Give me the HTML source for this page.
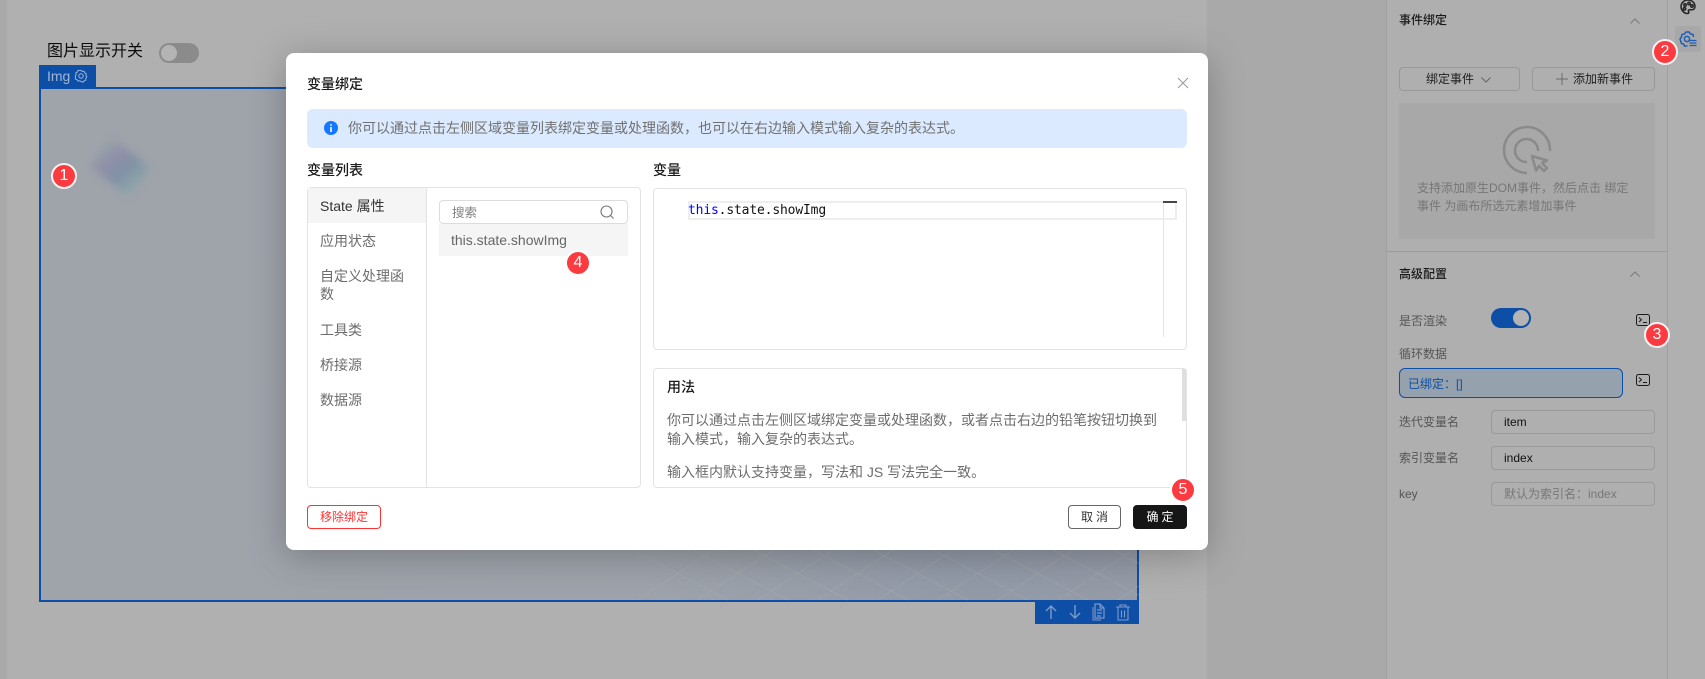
<!DOCTYPE html>
<html lang="zh"><head><meta charset="utf-8"><title>变量绑定</title>
<style>
*{box-sizing:border-box}
html,body{margin:0;padding:0;width:1705px;height:679px;overflow:hidden;background:#b0b0b0;font-family:"Liberation Sans","Noto Sans CJK SC",sans-serif;color:#6c6c6c}
.a{position:absolute}
.t{position:absolute;white-space:nowrap;line-height:20px;height:20px}
.f12{font-size:12px}.f14{font-size:14px}
.b{color:#1a1a1a;font-weight:500}
.badge{position:absolute;width:26px;height:26px;border-radius:50%;background:#fb3b40;border:2px solid #f2f2f2;color:#fff;font-size:16px;line-height:22px;text-align:center;font-family:"Liberation Sans",sans-serif}
.btn{position:absolute;border:1px solid #989898;border-radius:4px}
.inp{position:absolute;border:1px solid #999;border-radius:4px;left:1491px;width:164px;height:24px;font-size:12px;line-height:22px;padding-left:12px;color:#111}
svg{position:absolute;overflow:visible;display:block}
</style></head><body>

<!-- backgrounds -->
<div class="a" style="left:0;top:0;width:7px;height:679px;background:#a9a9a9"></div>
<div class="a" style="left:1207px;top:0;width:179px;height:679px;background:#a9a9a9"></div>
<div class="a" style="left:1386px;top:0;width:282px;height:679px;background:#afafaf;border-left:1px solid #a0a0a0;border-right:1px solid #a0a0a0"></div>

<!-- canvas -->
<div class="t" style="left:47px;top:42px;font-size:16px;color:#0c0c0c">图片显示开关</div>
<div class="a" style="left:159px;top:43px;width:40px;height:20px;border-radius:10px;background:#8b8b8b"></div>
<div class="a" style="left:161px;top:45px;width:16px;height:16px;border-radius:50%;background:#b4b4b4"></div>

<div class="a" style="left:39px;top:65px;width:57px;height:24px;background:#0d4ea6"></div>
<div class="t f14" style="left:47px;top:66px;color:#a2b6d4">Img</div>
<svg style="left:74px;top:69px" width="14" height="14" viewBox="0 0 14 14" fill="none" stroke="#a2b6d4" stroke-width="1"><path d="M7 1l1.2 1.4 1.9-.3.7 1.8 1.7.8-.4 1.9 1 1.4-1.2 1.4.2 1.9-1.8.6-.9 1.6-1.9-.4L7 13l-1.4-1-1.9.4-.9-1.6-1.8-.6.2-1.9L1 7l1-1.4-.4-1.9 1.7-.8.7-1.8 1.9.3z" transform="translate(.3 .2) scale(.96)"/><circle cx="7" cy="7" r="2.2"/></svg>

<div class="a" style="left:39px;top:87px;width:1100px;height:515px;border:2px solid #0d4ea6;background:linear-gradient(90deg,#9fa3aa 0%,#9ea3ab 55%,#929aa8 85%,#959ba7 100%);overflow:hidden"></div>
<div class="a" style="left:84px;top:137px;width:70px;height:63px;overflow:visible">
  <div class="a" style="left:11px;top:12px;width:50px;height:36px;transform:rotate(38deg);background:linear-gradient(100deg,#96a5a8 0%,#8f8fa9 30%,#8191a5 60%,#8fa9ac 100%);filter:blur(4px)"></div>
</div>
<svg style="left:41px;top:89px" width="1096" height="511" viewBox="41 89 1096 511"><g stroke="#b4b6ae" stroke-width="1" stroke-opacity=".3">
<path d="M638 600L728 540M698 600L788 540M758 600L848 540M818 600L908 540M878 600L968 540M938 600L1028 540M998 600L1088 540M1058 600L1148 540M1118 600L1208 540"/>
<path d="M633 550L728 600M693 550L788 600M753 550L848 600M813 550L908 600M873 550L968 600M933 550L1028 600M993 550L1088 600M1053 550L1148 600M1113 550L1208 600"/>
</g></svg>
<div class="a" style="left:1035px;top:600px;width:104px;height:24px;background:#0d4ea6"></div>
<svg style="left:1035px;top:600px" width="104" height="24" viewBox="0 0 104 24" fill="none" stroke="#7e9ac6" stroke-width="1.4"><path d="M16 19V6M11 11l5-5 5 5M40 5v13M35 13l5 5 5-5"/><path d="M60 4h5l4 4v10H60zM65 4v4h4M62 10h5M62 13h5M62 16h4" stroke-width="1.2"/><path d="M58 7v13h8" stroke-width="1"/><path d="M81 7h14M85 7V5h6v2M83 7.500V20h10V7.500M86.500 10.500v7M89.500 10.500v7" stroke-width="1.1"/></svg>

<!-- right panel -->
<div class="t f12 b" style="left:1399px;top:10px">事件绑定</div>
<svg style="left:1630px;top:18px" width="10" height="6" fill="none" stroke="#7a7a7a"><path d="M.5 5.500L5 1l4.500 4.500"/></svg>
<div class="a" style="left:1675px;top:26px;width:26px;height:26px;border-radius:3px;background:#a8a8a8"></div>
<svg style="left:1680px;top:-1px" width="16" height="16" viewBox="0 0 16 16" fill="none" stroke="#222" stroke-width="1.500"><path d="M8 1C4 1 1 4 1 7.500S4 14.500 7.500 14.500c1.500 0 1.500-1 1-2-.4-1 .2-1.800 1.300-1.800h2.200c1.500 0 3-1 3-3.200C15 4 12 1 8 1z"/><circle cx="5" cy="6" r="1.200"/><circle cx="9" cy="4.500" r="1.200"/><circle cx="12" cy="7" r="1.200"/><circle cx="4.500" cy="9.800" r="1.200"/></svg>
<svg style="left:1679px;top:31px" width="18" height="16" viewBox="0 0 18 16" fill="none" stroke="#1f5cb8" stroke-width="1.500"><path d="M8.500 15H5.500L4.500 13 2.500 12.500 1 8 2.500 6 3 3.500 5.500 3 7 1h3l1.500 2 2.500.5.500 2.500"/><circle cx="8" cy="8" r="2.600"/><path d="M10.500 9.500h7M10.500 12h7M10.500 14.500h7" stroke-width="1.200"/></svg>

<div class="btn" style="left:1399px;top:67px;width:121px;height:24px"></div>
<div class="t f12" style="left:1426px;top:69px;color:#1f1f1f">绑定事件</div>
<svg style="left:1481px;top:77px" width="10" height="6" fill="none" stroke="#666"><path d="M.5 .5L5 5l4.500-4.500"/></svg>
<div class="btn" style="left:1532px;top:67px;width:123px;height:24px"></div>
<svg style="left:1556px;top:73px" width="12" height="12" stroke="#777" stroke-width="1.200"><path d="M6 0v12M0 6h12"/></svg>
<div class="t f12" style="left:1573px;top:69px;color:#1f1f1f">添加新事件</div>
<div class="a" style="left:1399px;top:103px;width:256px;height:136px;background:#a8a8a8"></div>
<svg style="left:1503px;top:127px" width="50" height="50" viewBox="0 0 50 50" fill="none" stroke="#8a8a8a" stroke-width="2.500"><path d="M24 46A23 23 0 1 1 47 24"/><path d="M24 35A11.500 11.500 0 1 1 35 24" /><path d="M29 29l15 4.500-5 2.500 5 5-3 3-5-5-3 4.500z" stroke-linejoin="round"/></svg>
<div class="t f12" style="left:1417px;top:178px;color:#767676">支持添加原生DOM事件，然后点击 绑定</div>
<div class="t f12" style="left:1417px;top:196px;color:#767676">事件 为画布所选元素增加事件</div>
<div class="a" style="left:1387px;top:251px;width:280px;height:1px;background:#9b9b9b"></div>

<div class="t f12 b" style="left:1399px;top:264px">高级配置</div>
<svg style="left:1630px;top:271px" width="10" height="6" fill="none" stroke="#7a7a7a"><path d="M.5 5.500L5 1l4.500 4.500"/></svg>
<div class="t f12" style="left:1399px;top:311px;color:#555">是否渲染</div>
<div class="a" style="left:1491px;top:308px;width:40px;height:20px;border-radius:10px;background:#0d4ea6"></div>
<div class="a" style="left:1513px;top:310px;width:16px;height:16px;border-radius:50%;background:#b4b4b4"></div>
<svg style="left:1636px;top:314px" width="14" height="12" viewBox="0 0 14 12" fill="none" stroke="#1c1c1c"><rect x=".5" y=".5" width="13" height="11" rx="2"/><path d="M3 3.500L5.500 5.800 3 8M7 8.500h4"/></svg>
<div class="t f12" style="left:1399px;top:344px;color:#555">循环数据</div>
<div class="a" style="left:1399px;top:368px;width:224px;height:30px;border:1px solid #0d4ea6;border-radius:6px;background:#96a1ae"></div>
<div class="t f12" style="left:1408px;top:374px;color:#0d4ea6">已绑定：[]</div>
<svg style="left:1636px;top:374px" width="14" height="12" viewBox="0 0 14 12" fill="none" stroke="#1c1c1c"><rect x=".5" y=".5" width="13" height="11" rx="2"/><path d="M3 3.500L5.500 5.800 3 8M7 8.500h4"/></svg>
<div class="t f12" style="left:1399px;top:412px;color:#555">迭代变量名</div>
<div class="inp" style="top:410px">item</div>
<div class="t f12" style="left:1399px;top:448px;color:#555">索引变量名</div>
<div class="inp" style="top:446px">index</div>
<div class="t f12" style="left:1399px;top:484px;color:#555">key</div>
<div class="inp" style="top:482px;color:#777">默认为索引名：index</div>

<!-- dialog -->
<div class="a" style="left:286px;top:53px;width:922px;height:497px;background:#fff;border-radius:8px;box-shadow:0 6px 36px rgba(0,0,0,.25)"></div>
<div class="t f14 b" style="left:307px;top:74px">变量绑定</div>
<svg style="left:1178px;top:78px" width="10" height="10" stroke="#999"><path d="M0 0l10 10M10 0L0 10"/></svg>

<div class="a" style="left:307px;top:109px;width:880px;height:39px;border-radius:6px;background:#dbeafe"></div>
<svg style="left:324px;top:121px" width="14" height="14" viewBox="0 0 14 14"><circle cx="7" cy="7" r="7" fill="#1677ff"/><rect x="6.200" y="6" width="1.600" height="5" fill="#fff"/><rect x="6.200" y="3.200" width="1.600" height="1.600" fill="#fff"/></svg>
<div class="t f14" style="left:348px;top:118px;color:#707070">你可以通过点击左侧区域变量列表绑定变量或处理函数，也可以在右边输入模式输入复杂的表达式。</div>

<div class="t f14 b" style="left:307px;top:160px">变量列表</div>
<div class="a" style="left:307px;top:187px;width:334px;height:301px;border:1px solid #e3e3e3;border-radius:4px"></div>
<div class="a" style="left:426px;top:188px;width:1px;height:300px;background:#e3e3e3"></div>
<div class="a" style="left:308px;top:188px;width:118px;height:35px;background:#f5f5f5"></div>
<div class="t f14" style="left:320px;top:196px;color:#333">State 属性</div>
<div class="t f14" style="left:320px;top:231px">应用状态</div>
<div class="t f14" style="left:320px;top:266px">自定义处理函</div>
<div class="t f14" style="left:320px;top:284px">数</div>
<div class="t f14" style="left:320px;top:320px">工具类</div>
<div class="t f14" style="left:320px;top:355px">桥接源</div>
<div class="t f14" style="left:320px;top:390px">数据源</div>

<div class="a" style="left:439px;top:200px;width:189px;height:24px;border:1px solid #dcdcdc;border-radius:4px"></div>
<div class="t" style="left:452px;top:203px;font-size:12.500px;color:#808080">搜索</div>
<svg style="left:600px;top:205px" width="14" height="14" viewBox="0 0 14 14" fill="none" stroke="#777" stroke-width="1.100"><circle cx="6.500" cy="6.500" r="5.500"/><path d="M10.500 10.500l3 3"/></svg>
<div class="a" style="left:439px;top:224px;width:189px;height:32px;background:#f5f5f5"></div>
<div class="t f14" style="left:451px;top:230px;color:#666">this.state.showImg</div>

<div class="t f14 b" style="left:653px;top:160px">变量</div>
<div class="a" style="left:653px;top:188px;width:534px;height:162px;border:1px solid #e3e3e3;border-radius:4px"></div>
<div class="a" style="left:688px;top:201px;width:489px;height:19px;border:2px solid #eeeeee"></div>
<div class="t" style="left:688px;top:201px;font-size:13px;letter-spacing:-.16px;font-family:'DejaVu Sans Mono','Liberation Mono',monospace;color:#111"><span style="color:#0000ff">this</span>.state.showImg</div>
<div class="a" style="left:1163px;top:201px;width:1px;height:136px;background:#e5e5e5"></div>
<div class="a" style="left:1163px;top:201px;width:14px;height:2px;background:#444"></div>

<div class="a" style="left:653px;top:368px;width:534px;height:120px;border:1px solid #e3e3e3;border-radius:4px"></div>
<div class="a" style="left:1182px;top:369px;width:4px;height:52px;background:#dedede"></div>
<div class="t f14 b" style="left:667px;top:377px">用法</div>
<div class="t f14" style="left:667px;top:410px">你可以通过点击左侧区域绑定变量或处理函数，或者点击右边的铅笔按钮切换到</div>
<div class="t f14" style="left:667px;top:429px">输入模式，输入复杂的表达式。</div>
<div class="t f14" style="left:667px;top:462px">输入框内默认支持变量，写法和 JS 写法完全一致。</div>

<div class="a f12" style="left:307px;top:505px;width:74px;height:24px;border:1px solid #f33;border-radius:4px;color:#f33;line-height:22px;text-align:center">移除绑定</div>
<div class="a f12" style="left:1068px;top:505px;width:53px;height:24px;border:1px solid #666;border-radius:4px;color:#333;line-height:22px;text-align:center;letter-spacing:3px;text-indent:3px">取消</div>
<div class="a f12" style="left:1133px;top:505px;width:54px;height:24px;background:#161616;border-radius:4px;color:#fff;line-height:24px;text-align:center;letter-spacing:3px;text-indent:3px">确定</div>

<!-- badges -->
<div class="badge" style="left:51px;top:163px">1</div>
<div class="badge" style="left:1652px;top:39px">2</div>
<div class="badge" style="left:1644px;top:322px">3</div>
<div class="badge" style="left:565px;top:250px;border-color:#fff">4</div>
<div class="badge" style="left:1170px;top:477px;border-color:#fff">5</div>
</body></html>
